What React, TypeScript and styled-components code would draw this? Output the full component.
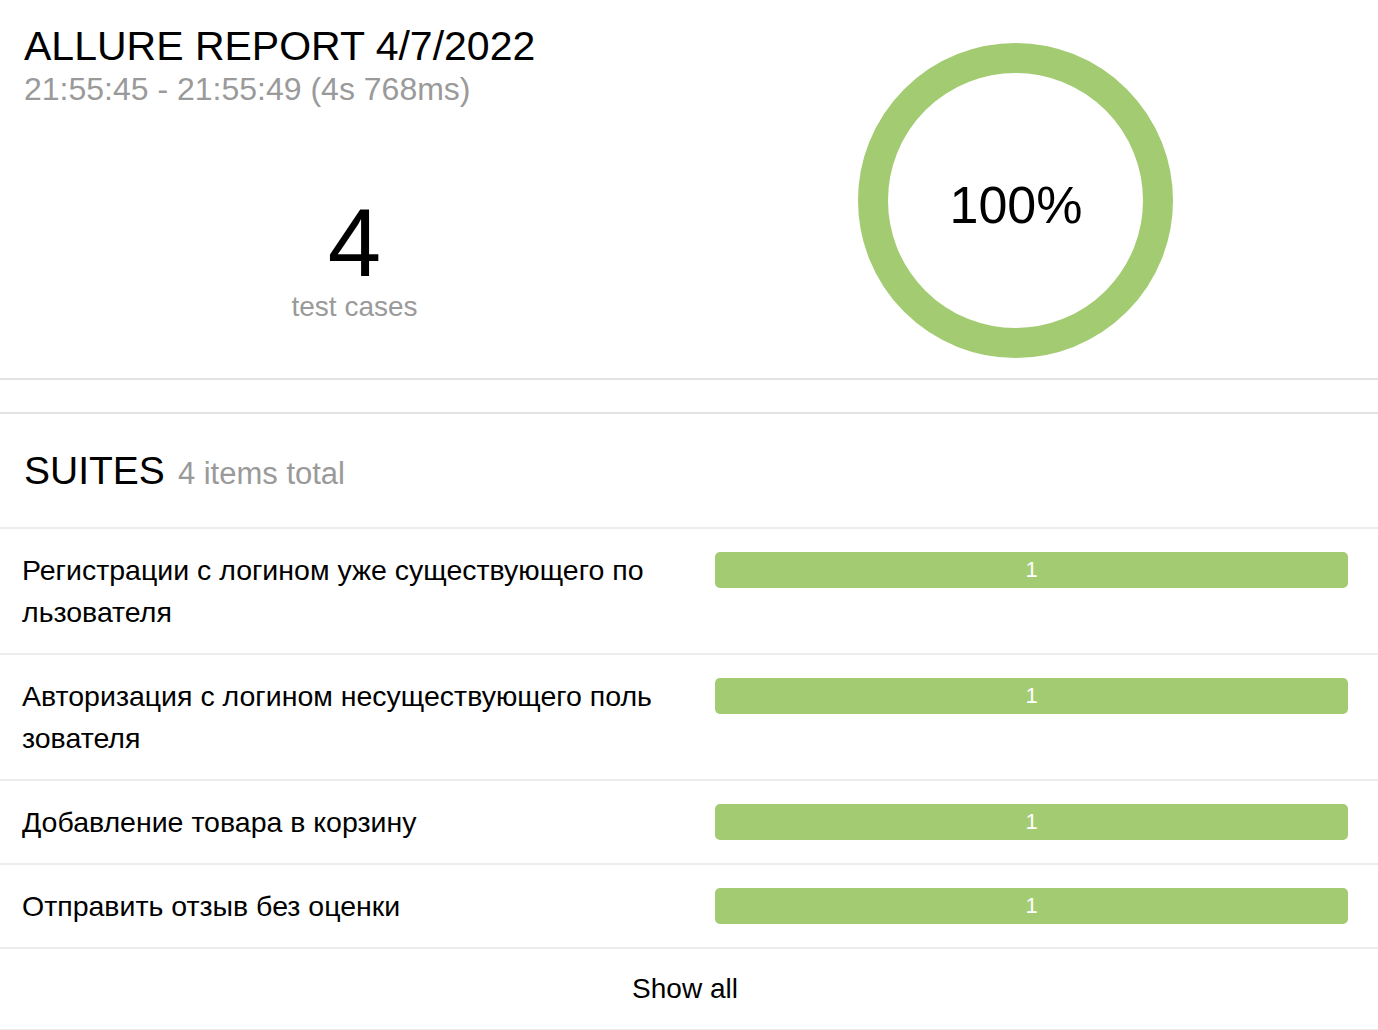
import styled, { createGlobalStyle } from "styled-components";

const GlobalStyle = createGlobalStyle`
  html, body {
    margin: 0;
    padding: 0;
    background: #fff;
  }
  body {
    font-family: "Liberation Sans", Arial, Helvetica, sans-serif;
    color: #000;
  }
`;

const GREEN = "#a3cb72";

const suites = [
  { name: "Регистрации с логином уже существующего пользователя", passed: 1 },
  { name: "Авторизация с логином несуществующего пользователя", passed: 1 },
  { name: "Добавление товара в корзину", passed: 1 },
  { name: "Отправить отзыв без оценки", passed: 1 },
];

const Page = styled.div`
  width: 1378px;
`;

const Summary = styled.section`
  height: 380px;
  box-sizing: border-box;
  display: grid;
  grid-template-columns: 1fr 1fr;
  padding: 0 32px 0 24px;
  border-bottom: 2px solid #e3e3e3;
`;

const LeftCol = styled.div`
  display: flex;
  flex-direction: column;
`;

const Title = styled.h1`
  margin: 0;
  padding-top: 22px;
  font-size: 41px;
  line-height: 48px;
  font-weight: 400;
  white-space: nowrap;
`;

const Subtitle = styled.div`
  font-size: 32px;
  line-height: 39px;
  color: #9a9a9a;
  white-space: nowrap;
`;

const Stats = styled.div`
  margin-top: 86px;
  display: flex;
  flex-direction: column;
  align-items: center;
`;

const BigNumber = styled.div`
  font-size: 96px;
  line-height: 96px;
`;

const StatLabel = styled.div`
  font-size: 28px;
  line-height: 32px;
  color: #9a9a9a;
`;

const RightCol = styled.div`
  display: flex;
  justify-content: center;
  padding-top: 43px;
`;

const Donut = ({ percent }: { percent: number }) => (
  <svg width="315" height="315" viewBox="0 0 315 315">
    <circle cx="157.5" cy="157.5" r="142.5" fill="none" stroke={GREEN} strokeWidth="30" />
    <text
      x="158"
      y="180"
      textAnchor="middle"
      fontSize="52"
      fontFamily='"Liberation Sans", Arial, sans-serif'
      fill="#000"
    >
      {percent}%
    </text>
  </svg>
);

const Gap = styled.div`
  height: 32px;
`;

const SuitesWidget = styled.section`
  border-top: 2px solid #e3e3e3;
  border-bottom: 2px solid #ececec;
`;

const SuitesHeader = styled.h2`
  margin: 0;
  padding: 33px 24px 29px;
  font-size: 39px;
  line-height: 48px;
  font-weight: 400;
`;

const Count = styled.span`
  margin-left: 13px;
  font-size: 31px;
  color: #9a9a9a;
`;

const Row = styled.div`
  display: grid;
  grid-template-columns: 635px 1fr;
  column-gap: 58px;
  align-items: start;
  padding: 20px 30px 20px 22px;
  border-top: 2px solid #ececec;
`;

const SuiteName = styled.div`
  font-size: 28.5px;
  line-height: 42px;
  word-break: break-all;
`;

const Bar = styled.div`
  margin-top: 3px;
  height: 36px;
  border-radius: 5px;
  background: ${GREEN};
  color: #fff;
  font-size: 22px;
  display: flex;
  align-items: center;
  justify-content: center;
`;

const ShowAll = styled.div`
  border-top: 2px solid #ececec;
  padding: 19px 8px 19px 0;
  font-size: 28px;
  line-height: 42px;
  text-align: center;
`;

export default function App() {
  return (
    <Page>
      <GlobalStyle />
      <Summary>
        <LeftCol>
          <Title>ALLURE REPORT 4/7/2022</Title>
          <Subtitle>21:55:45 - 21:55:49 (4s 768ms)</Subtitle>
          <Stats>
            <BigNumber>4</BigNumber>
            <StatLabel>test cases</StatLabel>
          </Stats>
        </LeftCol>
        <RightCol>
          <Donut percent={100} />
        </RightCol>
      </Summary>
      <Gap />
      <SuitesWidget>
        <SuitesHeader>
          SUITES<Count>4 items total</Count>
        </SuitesHeader>
        {suites.map((s) => (
          <Row key={s.name}>
            <SuiteName>{s.name}</SuiteName>
            <Bar>{s.passed}</Bar>
          </Row>
        ))}
        <ShowAll>Show all</ShowAll>
      </SuitesWidget>
    </Page>
  );
}
